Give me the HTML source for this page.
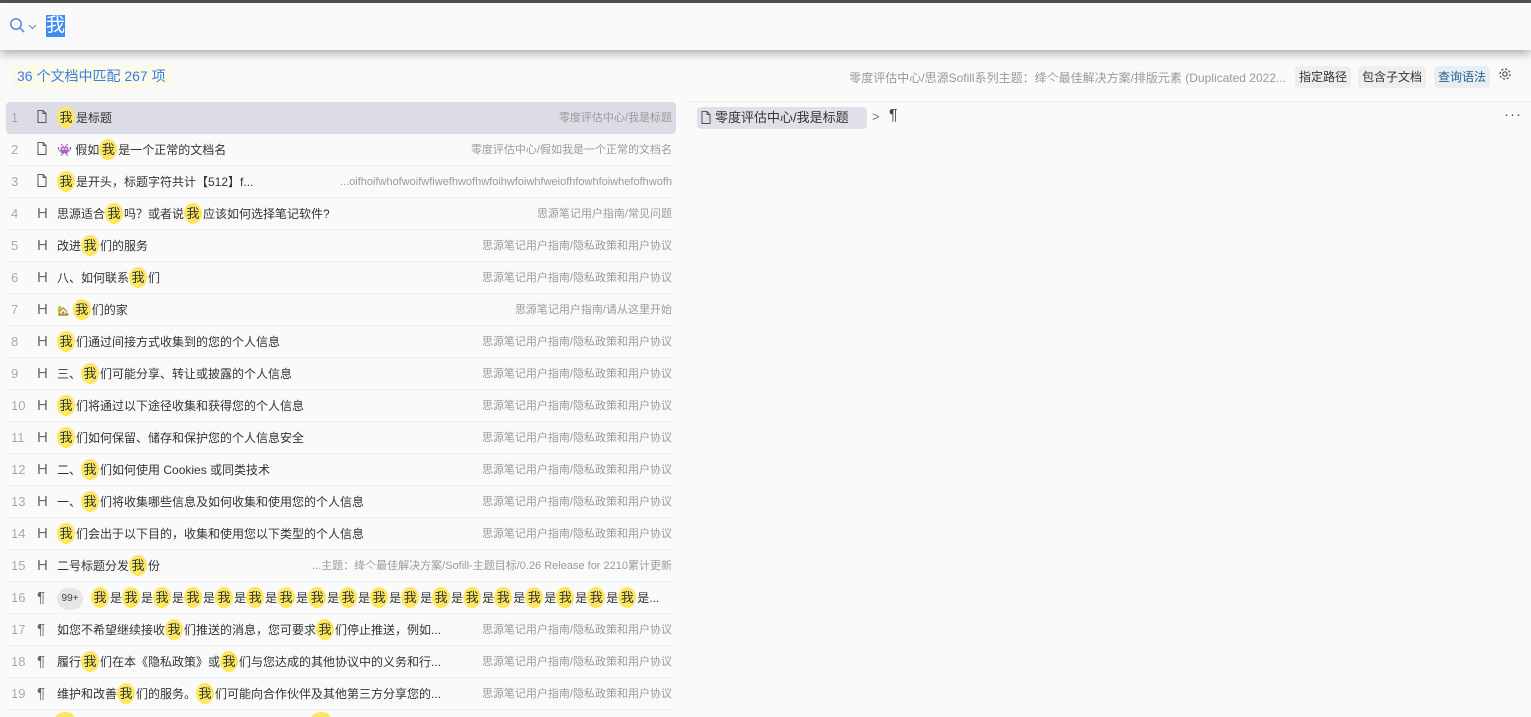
<!DOCTYPE html><html><head><meta charset="utf-8"><style>
*{box-sizing:border-box;margin:0;padding:0}
html,body{width:1531px;height:717px;overflow:hidden}
body{background:#fafafa;font-family:"Liberation Sans","Noto Sans CJK SC",sans-serif;position:relative;color:#222}
.top{position:absolute;left:0;top:0;width:1531px;height:3px;background:#555}
.bar{position:absolute;left:0;top:3px;width:1531px;height:47px;background:#fafafa;box-shadow:0 3px 10px rgba(0,0,0,.35);z-index:2}
.sel{position:absolute;left:46px;top:12px;background:#3b8cf5;color:#fff;font-size:19px;line-height:22px;padding:0}
.cnt{position:absolute;left:13px;top:65px;height:23px;line-height:23px;padding:0 4px;background:#fbf9e8;color:#3d7fe0;font-size:14px}
.hp{position:absolute;right:245px;top:69px;font-size:12px;color:#999}
.btn{position:absolute;top:66px;height:22px;line-height:22px;padding:0 4px;background:#eeeeee;border-radius:4px;font-size:12px;color:#333}
.row{position:absolute;left:6px;width:670px;height:32px;border-bottom:1px solid #efefef;font-size:12px;line-height:32px;white-space:nowrap}
.row.a{background:#dcdce6;border-radius:4px;border-bottom:none}
.n{position:absolute;left:5px;color:#aaa;font-size:13px}
.ic{position:absolute;left:31px;color:#666;font-size:15px}
.t{position:absolute;left:51px;color:#333}
.p{position:absolute;right:4px;color:#9a9a9a;font-size:11px}
.m{display:inline-block;background:#fde75e;border-radius:50%;width:18px;height:21px;line-height:21px;text-align:center;margin:0 1px 0 0;vertical-align:middle;position:relative;top:-1px;font-size:13px}
</style></head><body>
<div class="top"></div>
<div class="bar">
<svg style="position:absolute;left:9px;top:14px" width="32" height="18" viewBox="0 0 32 18"><circle cx="7" cy="7" r="5.2" fill="none" stroke="#5c8ee6" stroke-width="1.6"/><line x1="10.8" y1="10.8" x2="15" y2="15" stroke="#5c8ee6" stroke-width="1.7"/><polyline points="20,8 23.5,11.5 27,8" fill="none" stroke="#5c8ee6" stroke-width="1.2"/></svg>
<span class="sel">我</span>
</div>
<div class="cnt">36 个文档中匹配 267 项</div>
<div class="hp">零度评估中心/思源Sofill系列主题：绛亽最佳解决方案/排版元素 (Duplicated 2022...</div>
<div class="btn" style="left:1295px">指定路径</div>
<div class="btn" style="left:1358px">包含子文档</div>
<div class="btn" style="left:1434px;color:#1f5f8e;background:#e8eef2">查询语法</div>
<svg style="position:absolute;left:1498px;top:67px" width="14" height="14" viewBox="0 0 14 14"><circle cx="7" cy="7" r="2.2" fill="none" stroke="#555" stroke-width="1.2"/><circle cx="7" cy="7" r="5" fill="none" stroke="#555" stroke-width="1.3" stroke-dasharray="2.2 1.7"/></svg>
<div style="position:absolute;left:686px;top:101px;width:845px;height:1px;background:#ececec"></div>
<div style="position:absolute;left:697px;top:107px;width:170px;height:22px;line-height:22px;padding:0 4px;background:#e0e0e8;border-radius:4px;font-size:13px;color:#333"><svg width="10" height="13" viewBox="0 0 10 13" style="vertical-align:-2px;margin-right:4px"><path d="M1 .5h5l3 3v9H1z M6 .5v3h3" fill="none" stroke="#555"/></svg>零度评估中心/我是标题</div>
<div style="position:absolute;left:872px;top:109px;font-size:13px;color:#777">&gt;</div>
<div style="position:absolute;left:889px;top:107px;font-size:16px;color:#444">¶</div>
<div style="position:absolute;left:1504px;top:106px;font-size:15px;color:#555;letter-spacing:1px">···</div>
<svg width="0" height="0" style="position:absolute"><defs><symbol id="d" viewBox="0 0 10 13"><path d="M1 .5h5l3 3v9H1z M6 .5v3h3" fill="none" stroke="#555"/></symbol></defs></svg>

<div class="row a" style="top:102px"><span class="n">1</span><span class="ic"><svg width="10" height="13" style="vertical-align:-1px"><use href="#d"/></svg></span><span class="t"><span class="m">我</span>是标题</span><span class="p">零度评估中心/我是标题</span></div>
<div class="row" style="top:134px"><span class="n">2</span><span class="ic"><svg width="10" height="13" style="vertical-align:-1px"><use href="#d"/></svg></span><span class="t"><span style="color:#6a5a9a">👾</span> 假如<span class="m">我</span>是一个正常的文档名</span><span class="p">零度评估中心/假如我是一个正常的文档名</span></div>
<div class="row" style="top:166px"><span class="n">3</span><span class="ic"><svg width="10" height="13" style="vertical-align:-1px"><use href="#d"/></svg></span><span class="t"><span class="m">我</span>是开头，标题字符共计【512】f...</span><span class="p">...oifhoifwhofwoifwfiwefhwofhwfoihwfoiwhfweiofhfowhfoiwhefofhwofh</span></div>
<div class="row" style="top:198px"><span class="n">4</span><span class="ic">H</span><span class="t">思源适合<span class="m">我</span>吗？或者说<span class="m">我</span>应该如何选择笔记软件?</span><span class="p">思源笔记用户指南/常见问题</span></div>
<div class="row" style="top:230px"><span class="n">5</span><span class="ic">H</span><span class="t">改进<span class="m">我</span>们的服务</span><span class="p">思源笔记用户指南/隐私政策和用户协议</span></div>
<div class="row" style="top:262px"><span class="n">6</span><span class="ic">H</span><span class="t">八、如何联系<span class="m">我</span>们</span><span class="p">思源笔记用户指南/隐私政策和用户协议</span></div>
<div class="row" style="top:294px"><span class="n">7</span><span class="ic">H</span><span class="t"><span style="font-size:10px">🏡</span> <span class="m">我</span>们的家</span><span class="p">思源笔记用户指南/请从这里开始</span></div>
<div class="row" style="top:326px"><span class="n">8</span><span class="ic">H</span><span class="t"><span class="m">我</span>们通过间接方式收集到的您的个人信息</span><span class="p">思源笔记用户指南/隐私政策和用户协议</span></div>
<div class="row" style="top:358px"><span class="n">9</span><span class="ic">H</span><span class="t">三、<span class="m">我</span>们可能分享、转让或披露的个人信息</span><span class="p">思源笔记用户指南/隐私政策和用户协议</span></div>
<div class="row" style="top:390px"><span class="n">10</span><span class="ic">H</span><span class="t"><span class="m">我</span>们将通过以下途径收集和获得您的个人信息</span><span class="p">思源笔记用户指南/隐私政策和用户协议</span></div>
<div class="row" style="top:422px"><span class="n">11</span><span class="ic">H</span><span class="t"><span class="m">我</span>们如何保留、储存和保护您的个人信息安全</span><span class="p">思源笔记用户指南/隐私政策和用户协议</span></div>
<div class="row" style="top:454px"><span class="n">12</span><span class="ic">H</span><span class="t">二、<span class="m">我</span>们如何使用 Cookies 或同类技术</span><span class="p">思源笔记用户指南/隐私政策和用户协议</span></div>
<div class="row" style="top:486px"><span class="n">13</span><span class="ic">H</span><span class="t">一、<span class="m">我</span>们将收集哪些信息及如何收集和使用您的个人信息</span><span class="p">思源笔记用户指南/隐私政策和用户协议</span></div>
<div class="row" style="top:518px"><span class="n">14</span><span class="ic">H</span><span class="t"><span class="m">我</span>们会出于以下目的，收集和使用您以下类型的个人信息</span><span class="p">思源笔记用户指南/隐私政策和用户协议</span></div>
<div class="row" style="top:550px"><span class="n">15</span><span class="ic">H</span><span class="t">二号标题分发<span class="m">我</span>份</span><span class="p">...主题：绛亽最佳解决方案/Sofill-主题目标/0.26 Release for 2210累计更新</span></div>
<div class="row" style="top:582px"><span class="n">16</span><span class="ic">¶</span><span class="t"><span style="display:inline-block;width:26px;height:22px;line-height:22px;border-radius:11px;background:#e6e6e6;font-size:10px;text-align:center;vertical-align:middle;color:#444;margin-right:8px">99+</span><span class="m">我</span>是<span class="m">我</span>是<span class="m">我</span>是<span class="m">我</span>是<span class="m">我</span>是<span class="m">我</span>是<span class="m">我</span>是<span class="m">我</span>是<span class="m">我</span>是<span class="m">我</span>是<span class="m">我</span>是<span class="m">我</span>是<span class="m">我</span>是<span class="m">我</span>是<span class="m">我</span>是<span class="m">我</span>是<span class="m">我</span>是<span class="m">我</span>是...</span></div>
<div class="row" style="top:614px"><span class="n">17</span><span class="ic">¶</span><span class="t">如您不希望继续接收<span class="m">我</span>们推送的消息，您可要求<span class="m">我</span>们停止推送，例如...</span><span class="p">思源笔记用户指南/隐私政策和用户协议</span></div>
<div class="row" style="top:646px"><span class="n">18</span><span class="ic">¶</span><span class="t">履行<span class="m">我</span>们在本《隐私政策》或<span class="m">我</span>们与您达成的其他协议中的义务和行...</span><span class="p">思源笔记用户指南/隐私政策和用户协议</span></div>
<div class="row" style="top:678px"><span class="n">19</span><span class="ic">¶</span><span class="t">维护和改善<span class="m">我</span>们的服务。<span class="m">我</span>们可能向合作伙伴及其他第三方分享您的...</span><span class="p">思源笔记用户指南/隐私政策和用户协议</span></div>
<div style="position:absolute;left:56px;top:712px;width:18px;height:10px;border-radius:50%;background:#fde75e"></div>
<div style="position:absolute;left:312px;top:712px;width:18px;height:10px;border-radius:50%;background:#fde75e"></div>
</body></html>
